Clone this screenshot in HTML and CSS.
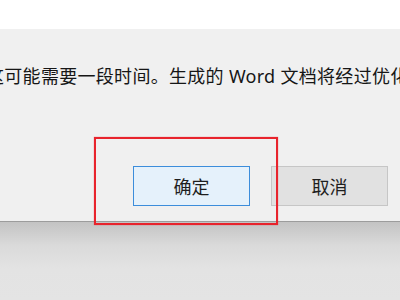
FILE: index.html
```html
<!DOCTYPE html>
<html lang="zh-CN">
<head>
    <meta charset="UTF-8">
    <title>确认</title>
    <link rel="stylesheet" href="styles.css">
</head>
<body>
    <div class="topbar"></div>

    <div class="dialog">
        <p class="message">这可能需要一段时间。生成的 Word 文档将经过优化</p>
        <div class="actions">
            <button class="btn btn-primary">确定</button>
            <button class="btn">取消</button>
        </div>
        <div class="highlight"></div>
    </div>

    <div class="backdrop"></div>
</body>
</html>
```

FILE: styles.css
```css
body {
    margin: 0;
    width: 400px;
    height: 300px;
    overflow: hidden;
    font-family: "Noto Sans", "Noto Sans CJK SC", sans-serif;
    background-color: #e3e3e3;
}

.topbar {
    height: 29px;
    background: #ffffff;
}

.dialog {
    position: relative;
    height: 192px;
    background-color: #f0f0f0;
    border-bottom: 1px solid #9c9c9c;
}

.message {
    margin: 0;
    padding-top: 35px;
    font-size: 18px;
    line-height: 24px;
    color: #161616;
    white-space: nowrap;
    text-indent: -14px;
    letter-spacing: 0.3px;
}

.actions {
    display: flex;
    gap: 21px;
    padding-left: 133px;
    margin-top: 78px;
}

.btn {
    width: 117px;
    height: 40px;
    box-sizing: border-box;
    border: 1px solid #c6c6c6;
    background: #e1e1e1;
    font-family: "Noto Sans CJK SC", sans-serif;
    font-size: 18px;
    color: #1e1e1e;
    padding: 0;
}

.btn-primary {
    border-color: #3c8ddb;
    background: #e5f1fb;
}

.highlight {
    position: absolute;
    left: 94px;
    top: 108px;
    width: 184px;
    height: 88px;
    box-sizing: border-box;
    border: 2px solid #e8232c;
    box-shadow: 0 0 1px rgba(232, 35, 44, 0.6);
}

.backdrop {
    height: 78px;
    background: linear-gradient(#c3c3c3 0%, #dadada 30%, #e3e3e3 60%, #e4e4e4 100%);
}
```
